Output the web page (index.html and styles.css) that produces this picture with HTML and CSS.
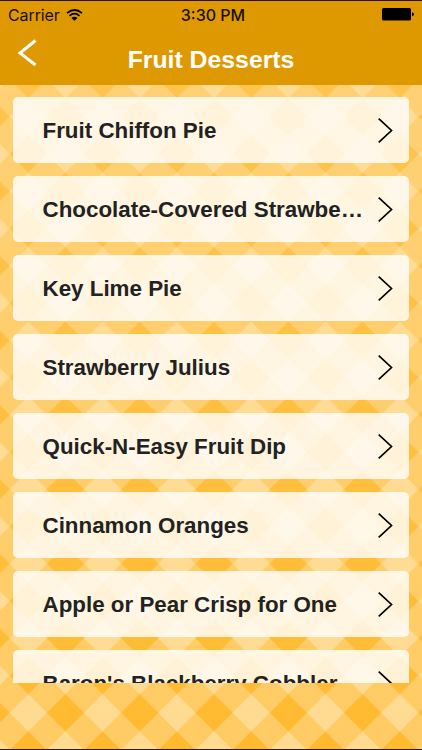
FILE: index.html
```html
<!DOCTYPE html>
<html lang="en">
<head>
    <meta charset="UTF-8">
    <meta name="viewport" content="width=device-width, initial-scale=1.0">
    <title>Fruit Desserts</title>
    <link rel="stylesheet" href="styles.css">
</head>
<body>
    <div class="screen">
        <svg class="gingham" width="422" height="750" aria-hidden="true">
            <defs>
                <pattern id="check" x="28.3" y="5" width="74.3" height="74.5" viewBox="0 0 74 74" preserveAspectRatio="none" patternUnits="userSpaceOnUse">
                    <rect width="74" height="74" fill="#ffcb64"/>
                    <path d="M37 18.5L55.5 37L37 55.5L18.5 37ZM0 -18.5L18.5 0L0 18.5L-18.5 0ZM74 -18.5L92.5 0L74 18.5L55.5 0ZM0 55.5L18.5 74L0 92.5L-18.5 74ZM74 55.5L92.5 74L74 92.5L55.5 74Z" fill="#ffba30"/>
                    <path d="M37 -18.5L55.5 0L37 18.5L18.5 0ZM37 55.5L55.5 74L37 92.5L18.5 74ZM0 18.5L18.5 37L0 55.5L-18.5 37ZM74 18.5L92.5 37L74 55.5L55.5 37Z" fill="#ffdb92"/>
                </pattern>
                <linearGradient id="fade" x1="0" y1="0" x2="0" y2="1">
                    <stop offset="0" stop-color="#ffe0a0" stop-opacity="0.3"/>
                    <stop offset="1" stop-color="#ffe0a0" stop-opacity="0"/>
                </linearGradient>
            </defs>
            <rect width="422" height="750" fill="url(#check)"/>
            <rect width="422" height="750" fill="url(#fade)"/>
        </svg>
        <header class="header">
            <div class="status-bar">
                <div class="carrier">
                    <span>Carrier</span>
                    <svg class="wifi" width="17" height="12" viewBox="0 0 17 12">
                        <path d="M1 4.2Q8.5 -2.2 16 4.2M3.5 6.8Q8.5 2.6 13.5 6.8" fill="none" stroke="#000" stroke-width="1.7"/>
                        <path d="M5.4 9Q8.5 6.6 11.6 9L8.5 11.8Z"/>
                    </svg>
                </div>
                <span class="time">3:30 PM</span>
                <svg class="battery" width="32" height="13" viewBox="0 0 32 13">
                    <rect width="29" height="12.5" rx="1.5"/>
                    <path d="M30 4.3Q32 4.8 32 6.3T30 8.3Z"/>
                </svg>
            </div>
            <div class="title-bar">
                <svg class="back" width="20" height="28" viewBox="0 0 20 28">
                    <path d="M18.5 1.5L3 14L18.5 26" fill="none" stroke="#fff" stroke-width="3"/>
                </svg>
                <h1>Fruit Desserts</h1>
            </div>
        </header>
        <ul class="recipes">
            <li class="recipe"><span>Fruit Chiffon Pie</span><svg class="arrow" viewBox="0 0 15 25"><path d="M.7 .7L13.5 12.5L.7 24.3"/></svg></li>
            <li class="recipe"><span>Chocolate-Covered Strawbe…</span><svg class="arrow" viewBox="0 0 15 25"><path d="M.7 .7L13.5 12.5L.7 24.3"/></svg></li>
            <li class="recipe"><span>Key Lime Pie</span><svg class="arrow" viewBox="0 0 15 25"><path d="M.7 .7L13.5 12.5L.7 24.3"/></svg></li>
            <li class="recipe"><span>Strawberry Julius</span><svg class="arrow" viewBox="0 0 15 25"><path d="M.7 .7L13.5 12.5L.7 24.3"/></svg></li>
            <li class="recipe"><span>Quick-N-Easy Fruit Dip</span><svg class="arrow" viewBox="0 0 15 25"><path d="M.7 .7L13.5 12.5L.7 24.3"/></svg></li>
            <li class="recipe"><span>Cinnamon Oranges</span><svg class="arrow" viewBox="0 0 15 25"><path d="M.7 .7L13.5 12.5L.7 24.3"/></svg></li>
            <li class="recipe"><span>Apple or Pear Crisp for One</span><svg class="arrow" viewBox="0 0 15 25"><path d="M.7 .7L13.5 12.5L.7 24.3"/></svg></li>
            <li class="recipe"><span>Baron's Blackberry Cobbler</span><svg class="arrow" viewBox="0 0 15 25"><path d="M.7 .7L13.5 12.5L.7 24.3"/></svg></li>
        </ul>
    </div>
</body>
</html>
```
FILE: styles.css
```css
* {
    box-sizing: border-box;
}

body {
    margin: 0;
    font-family: "Liberation Sans", Arial, sans-serif;
}

.screen {
    position: relative;
    width: 422px;
    height: 750px;
    overflow: hidden;
    border-top: 1px solid #2a1300;
    border-bottom: 1px solid #2a1a05;
}

.gingham {
    position: absolute;
    top: -1px;
    left: 0;
    z-index: -1;
}

.header {
    height: 84px;
    background-color: #df9900;
}

.status-bar {
    display: grid;
    grid-template-columns: 1fr auto 1fr;
    align-items: center;
    height: 27px;
    padding: 0 8px;
    font-family: Inter, sans-serif;
    font-size: 16px;
    color: #1a1000;
}

.carrier {
    display: flex;
    align-items: center;
    gap: 6px;
    letter-spacing: -0.1px;
}

.time {
    margin-left: 4px;
    font-weight: 500;
}

.battery {
    justify-self: end;
}

.title-bar {
    display: grid;
    grid-template-columns: 50px 1fr 50px;
    align-items: center;
    height: 57px;
}

.back {
    margin: 0 0 8px 17px;
}

h1 {
    margin: 6px 0 0;
    font-size: 24.8px;
    line-height: 30px;
    text-align: center;
    color: #fff;
}

.recipes {
    display: flex;
    flex-direction: column;
    gap: 13px;
    height: 598px;
    margin: 0;
    padding: 12px 13px 0;
    overflow: hidden;
    list-style: none;
}

.recipe {
    display: flex;
    flex: none;
    align-items: center;
    justify-content: space-between;
    height: 66px;
    padding: 0 16px 0 29.5px;
    border-radius: 5px;
    background-color: rgba(255, 255, 255, 0.8);
}

.recipe span {
    width: 326px;
    padding-top: 2px;
    overflow: hidden;
    font-size: 22.36px;
    font-weight: bold;
    line-height: 30px;
    white-space: nowrap;
    text-overflow: ellipsis;
    color: #222;
}

.arrow {
    flex: none;
    width: 15px;
    height: 25px;
    fill: none;
    stroke: #000;
    stroke-width: 1.7;
}
```
